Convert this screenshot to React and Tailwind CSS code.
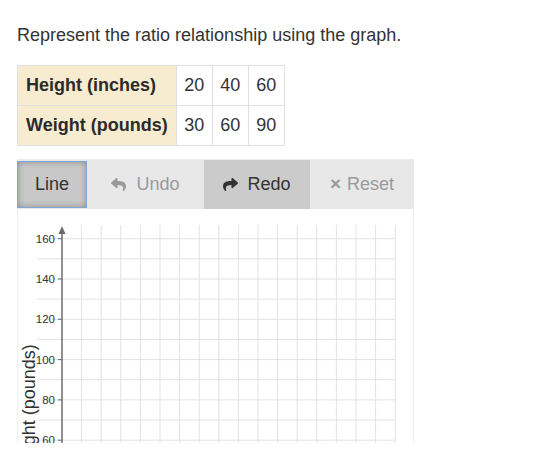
import React from 'react';
import { FaReply, FaShare } from 'react-icons/fa';

const rows = [
  { label: 'Height (inches)', values: [20, 40, 60] },
  { label: 'Weight (pounds)', values: [30, 60, 90] },
];

// graph geometry (local to the graph panel)
const AXIS_X = 44;
const COL = 19.6;
const yFor = (v) => 29.7 + (160 - v) * 2.015;

const Graph = () => {
  const vLines = Array.from({ length: 17 }, (_, i) => AXIS_X + (i + 1) * COL);
  const hLines = [];
  for (let v = 160; v >= 40; v -= 10) hLines.push(v);
  const labels = [160, 140, 120, 100, 80, 60];

  return (
    <svg width="397" height="300" className="absolute left-0 top-0">
      {hLines.map((v) => (
        <line key={v} x1="19" x2="377" y1={yFor(v)} y2={yFor(v)} stroke="#e2e2e2" strokeWidth="1" />
      ))}
      {vLines.map((x, i) => (
        <line key={i} x1={x} x2={x} y1="16" y2="300" stroke="#e2e2e2" strokeWidth="1" />
      ))}
      <line x1={AXIS_X} x2={AXIS_X} y1="22" y2="300" stroke="#6b6b6b" strokeWidth="1.5" />
      <polygon points={`${AXIS_X},17 ${AXIS_X - 3.5},25 ${AXIS_X + 3.5},25`} fill="#6b6b6b" />
      {labels.map((v) => (
        <g key={v}>
          <line x1={AXIS_X - 4} x2={AXIS_X} y1={yFor(v)} y2={yFor(v)} stroke="#6b6b6b" strokeWidth="1" />
          <text x="37" y={yFor(v) + 4} textAnchor="end" fontSize="11.5" fill="#333" fontFamily="'Liberation Sans', Arial, sans-serif">
            {v}
          </text>
        </g>
      ))}
      <text
        transform="translate(17,201) rotate(-90)"
        textAnchor="middle"
        fontSize="18"
        fill="#333"
        fontFamily="'Liberation Sans', Arial, sans-serif"
      >
        Weight (pounds)
      </text>
    </svg>
  );
};

const App = () => {
  return (
    <div className="w-[548px] h-[454px] bg-white overflow-hidden font-['Liberation_Sans',Arial,sans-serif] text-[#333]">
      <div className="pl-[17px] pt-[23px]">
        <p className="text-[18px] leading-[24px]">Represent the ratio relationship using the graph.</p>

        <table className="mt-[18px] border-collapse text-[18px]">
          <tbody>
            {rows.map((r) => (
              <tr key={r.label} className="h-[40px]">
                <th className="bg-[#f7ecd0] border border-[#e0e0e0] whitespace-nowrap px-[8px] text-left font-bold text-[#2b2b2b]">
                  {r.label}
                </th>
                {r.values.map((v) => (
                  <td key={v} className="border border-[#e0e0e0] w-[36px] text-center px-0">
                    {v}
                  </td>
                ))}
              </tr>
            ))}
          </tbody>
        </table>

        {/* toolbar */}
        <div className="mt-[13px] w-[397px] h-[50px] flex bg-[#e8e8e8] border-t border-[#ececec] text-[18px]">
          <button className="w-[70px] my-[1px] bg-[#c8c8c8] border border-[#7ea8d4] shadow-[inset_0_0_6px_rgba(0,0,0,0.3)] text-[#333] flex items-center justify-center">
            Line
          </button>
          <button className="w-[117px] flex items-center justify-center gap-[10px] text-[#9a9a9a]">
            <FaReply size={15} />
            Undo
          </button>
          <button className="w-[106px] bg-[#cbcbcb] flex items-center justify-center gap-[9px] text-[#333]">
            <FaShare size={15} />
            Redo
          </button>
          <button className="flex-1 flex items-center justify-center gap-[6px] text-[#9a9a9a]">
            <span className="text-[19px] font-bold">×</span>
            Reset
          </button>
        </div>

        {/* graph panel */}
        <div className="relative w-[397px] h-[234px] overflow-hidden border-x border-[#eeeeee] bg-white">
          <Graph />
        </div>
      </div>
    </div>
  );
};

export default App;
